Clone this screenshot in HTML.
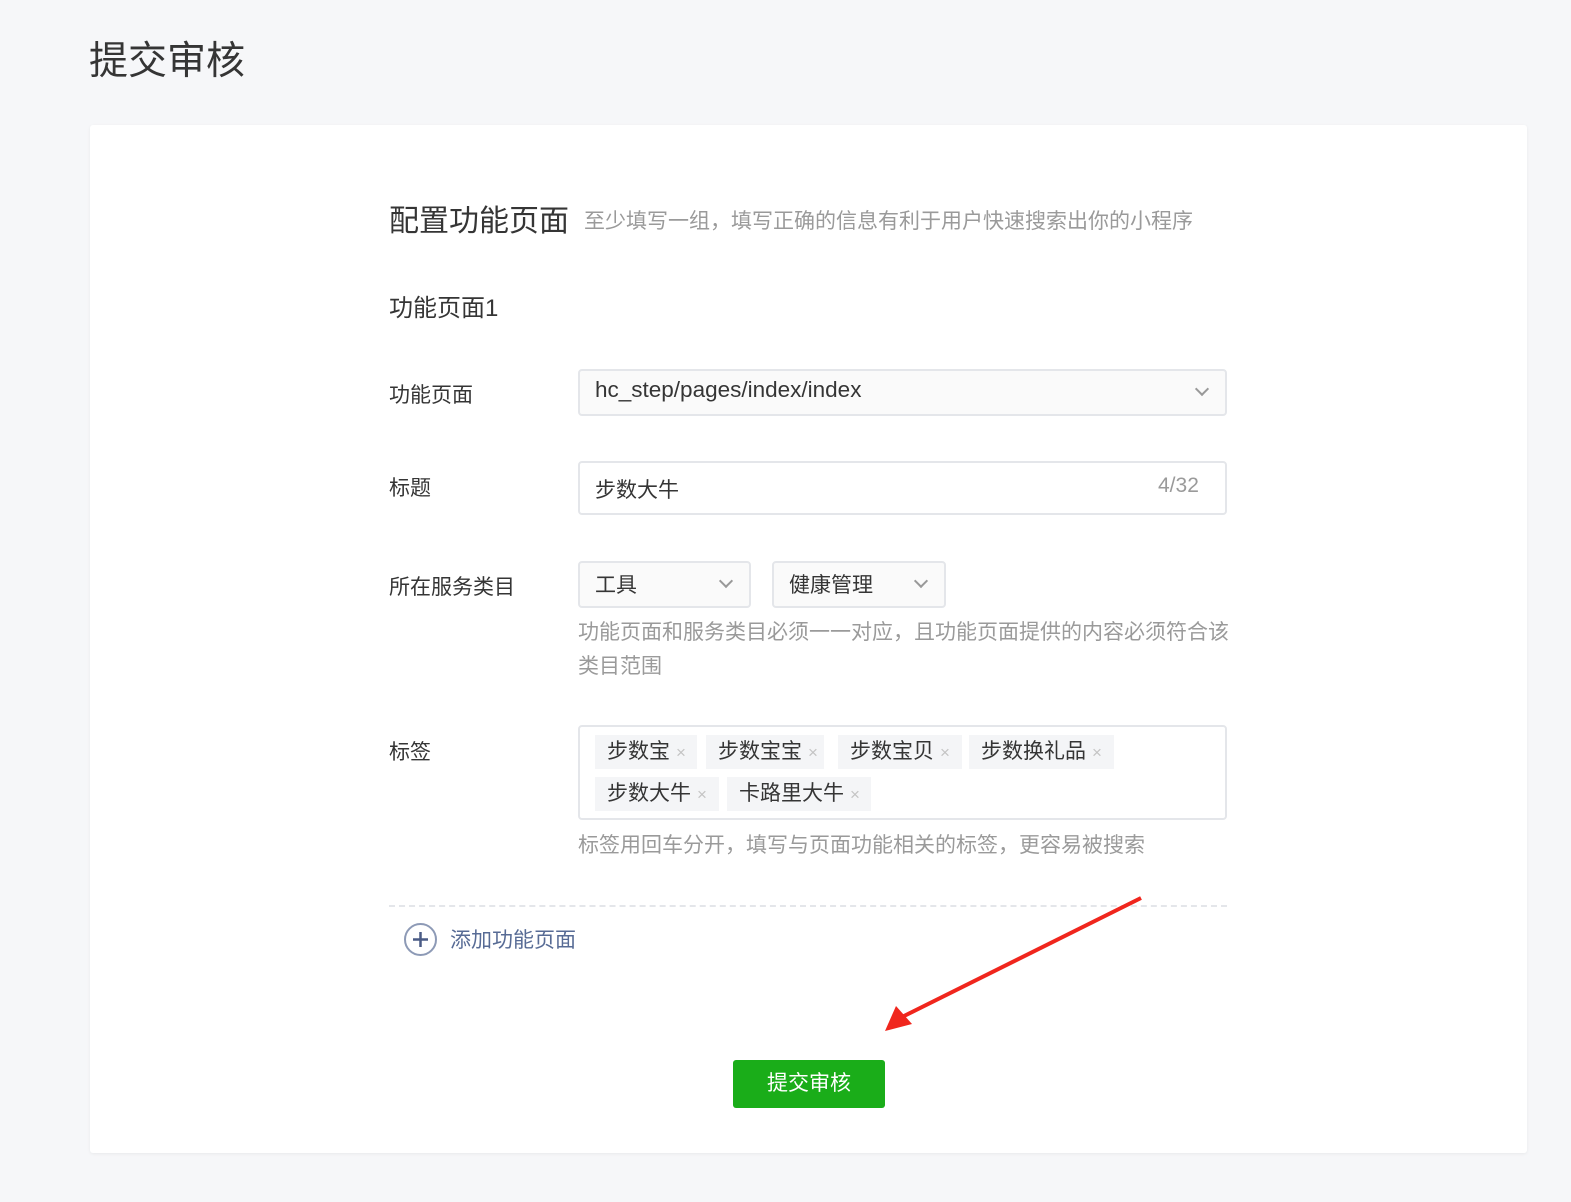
<!DOCTYPE html>
<html><head><meta charset="utf-8"><style>
*{margin:0;padding:0;box-sizing:border-box}
body{width:1571px;height:1202px;background:#f6f7f9;font-family:"Liberation Sans","Noto Sans CJK SC",sans-serif;color:#353535;position:relative;overflow:hidden}
.a{position:absolute;white-space:nowrap}
.card{position:absolute;left:90px;top:125px;width:1437px;height:1028px;background:#fff;border-radius:3px;box-shadow:0 1px 3px rgba(0,0,0,.06)}
.box{position:absolute;border:2px solid #e4e6ea;border-radius:4px;background:#fafafa}
.lab{font-size:21px;color:#353535}
.chev{position:absolute;width:10px;height:10px;border-right:2px solid #999;border-bottom:2px solid #999;transform:rotate(45deg)}
.tag{position:absolute;height:34px;background:#f4f5f7;font-size:21px;line-height:34px;padding-left:12px;color:#353535}
.tag span{color:#c4c4c4;font-size:17px;margin-left:6px}
.tip{font-size:21px;color:#9a9a9a}
</style></head><body>
<div class="a" style="left:89px;top:30px;font-size:39px;color:#353535">提交审核</div>
<div class="card"></div>
<div class="a" style="left:389px;top:196px;font-size:30px">配置功能页面</div>
<div class="a" style="left:584px;top:205px;font-size:21px;color:#9a9a9a">至少填写一组，填写正确的信息有利于用户快速搜索出你的小程序</div>
<div class="a" style="left:389px;top:288px;font-size:24px">功能页面1</div>

<div class="a lab" style="left:389px;top:379px">功能页面</div>
<div class="box" style="left:578px;top:369px;width:649px;height:47px"></div>
<div class="a" style="left:595px;top:377px;font-size:22.5px">hc_step/pages/index/index</div>
<div class="chev" style="left:1197px;top:384px"></div>

<div class="a lab" style="left:389px;top:472px">标题</div>
<div class="box" style="left:578px;top:461px;width:649px;height:54px;background:#fff"></div>
<div class="a" style="left:595px;top:474px;font-size:21px">步数大牛</div>
<div class="a" style="left:1158px;top:474px;font-size:21px;color:#9a9a9a">4/32</div>

<div class="a lab" style="left:389px;top:571px">所在服务类目</div>
<div class="box" style="left:578px;top:561px;width:173px;height:47px"></div>
<div class="a" style="left:595px;top:569px;font-size:21px">工具</div>
<div class="chev" style="left:721px;top:576px"></div>
<div class="box" style="left:772px;top:561px;width:174px;height:47px"></div>
<div class="a" style="left:789px;top:569px;font-size:21px">健康管理</div>
<div class="chev" style="left:916px;top:576px"></div>
<div class="a tip" style="left:578px;top:616px">功能页面和服务类目必须一一对应，且功能页面提供的内容必须符合该</div>
<div class="a tip" style="left:578px;top:650px">类目范围</div>

<div class="a lab" style="left:389px;top:736px">标签</div>
<div class="box" style="left:578px;top:725px;width:649px;height:95px;background:#fff"></div>
<div class="tag" style="left:595px;top:735px;width:102px">步数宝<span>×</span></div>
<div class="tag" style="left:706px;top:735px;width:118px">步数宝宝<span>×</span></div>
<div class="tag" style="left:838px;top:735px;width:124px">步数宝贝<span>×</span></div>
<div class="tag" style="left:969px;top:735px;width:145px">步数换礼品<span>×</span></div>
<div class="tag" style="left:595px;top:777px;width:124px">步数大牛<span>×</span></div>
<div class="tag" style="left:727px;top:777px;width:144px">卡路里大牛<span>×</span></div>
<div class="a tip" style="left:578px;top:829px">标签用回车分开，填写与页面功能相关的标签，更容易被搜索</div>

<div class="a" style="left:389px;top:905px;width:838px;border-top:2px dashed #e4e6ea"></div>
<svg class="a" style="left:403px;top:922px" width="35" height="35" viewBox="0 0 35 35"><circle cx="17.5" cy="17.5" r="15.5" fill="none" stroke="#8d9ab6" stroke-width="2"/><path d="M17.5 10v15M10 17.5h15" stroke="#4a5b85" stroke-width="2.5"/></svg>
<div class="a" style="left:450px;top:924px;font-size:21px;color:#576b95">添加功能页面</div>

<svg class="a" style="left:0;top:0" width="1571" height="1202"><path d="M1141 898 L900 1018" stroke="#f0261d" stroke-width="4"/><path d="M885 1031 L896 1006 L912 1024 Z" fill="#f0261d"/></svg>

<div class="a" style="left:733px;top:1060px;width:152px;height:48px;background:#1aad19;border-radius:3px;color:#fff;font-size:21px;line-height:48px;text-align:center">提交审核</div>
</body></html>
